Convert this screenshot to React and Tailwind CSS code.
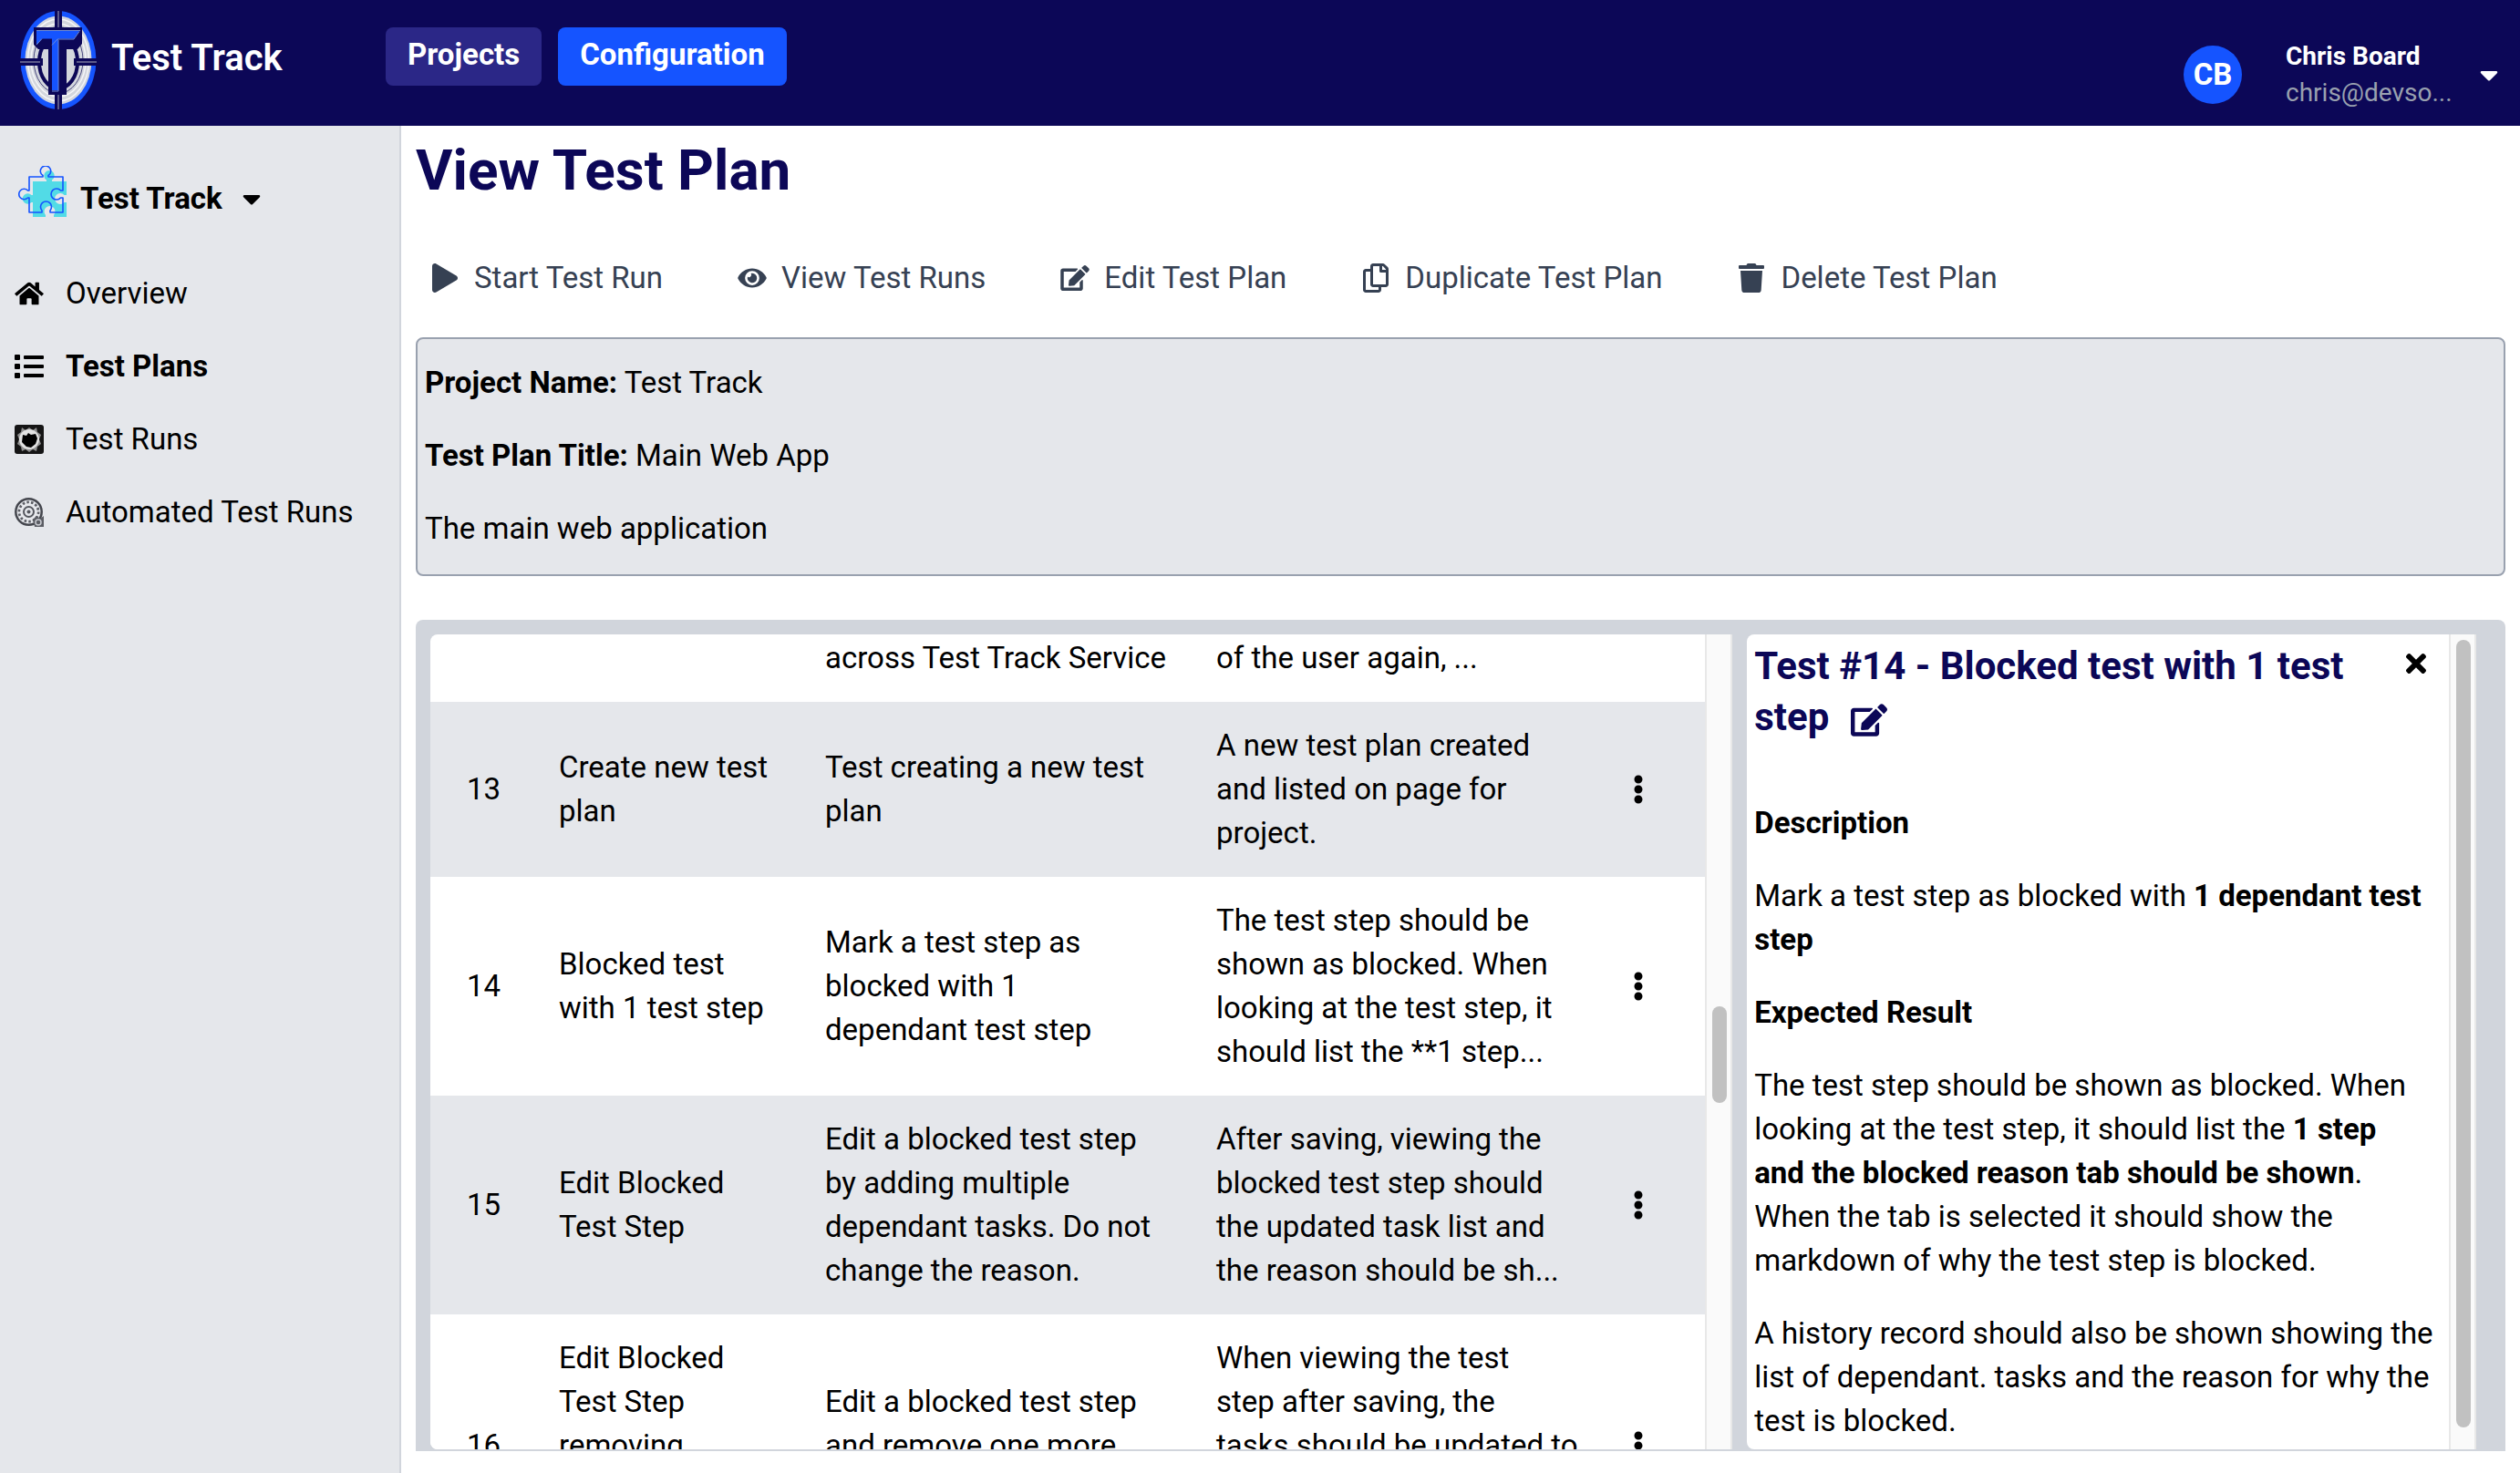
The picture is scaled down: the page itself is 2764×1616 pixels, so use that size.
import {
  FaCaretDown,
  FaEdit,
  FaEllipsisV,
  FaEye,
  FaHome,
  FaList,
  FaPlay,
  FaRegCopy,
  FaTimes,
  FaTrash,
} from "react-icons/fa";

const actions = [
  { label: "Start Test Run", icon: <FaPlay className="h-8 w-7" /> },
  { label: "View Test Runs", icon: <FaEye className="h-7 w-8" /> },
  { label: "Edit Test Plan", icon: <FaEdit className="h-7 w-8" /> },
  { label: "Duplicate Test Plan", icon: <FaRegCopy className="h-8 w-7" /> },
  { label: "Delete Test Plan", icon: <FaTrash className="h-8 w-7" /> },
];

const tests = [
  {
    id: 13,
    name: "Create new test\nplan",
    description: "Test creating a new test\nplan",
    expected: "A new test plan created\nand listed on page for\nproject.",
  },
  {
    id: 14,
    name: "Blocked test\nwith 1 test step",
    description: "Mark a test step as\nblocked with 1\ndependant test step",
    expected: "The test step should be\nshown as blocked. When\nlooking at the test step, it\nshould list the **1 step...",
  },
  {
    id: 15,
    name: "Edit Blocked\nTest Step",
    description: "Edit a blocked test step\nby adding multiple\ndependant tasks. Do not\nchange the reason.",
    expected: "After saving, viewing the\nblocked test step should\nthe updated task list and\nthe reason should be sh...",
  },
  {
    id: 16,
    name: "Edit Blocked\nTest Step\nremoving\ndependant\ntask",
    description: "Edit a blocked test step\nand remove one more\ndependant tasks.",
    expected: "When viewing the test\nstep after saving, the\ntasks should be updated to\nshow only the remaining\ntasks.",
  },
];

function Logo() {
  return (
    <svg viewBox="0 0 84 108" className="h-[108px] w-[84px] shrink-0" aria-hidden="true">
      <ellipse cx="42" cy="54" rx="41.5" ry="54" fill="#1554ff" />
      <ellipse cx="42" cy="54" rx="36.5" ry="48.5" fill="#d3d6dd" />
      <ellipse cx="42" cy="54" rx="33.5" ry="45" fill="none" stroke="#f4f5f8" strokeWidth="1.5" />
      <ellipse cx="42" cy="54" rx="30" ry="40" fill="none" stroke="#f4f5f8" strokeWidth="1.5" />
      <ellipse cx="42" cy="54" rx="27" ry="36.5" fill="none" stroke="#4b4a80" strokeWidth="1" />
      <ellipse cx="42" cy="56" rx="21" ry="29" fill="#d3d6dd" stroke="#0c0757" strokeWidth="4" />
      {/* crosshair */}
      <path d="M38 0h8v20h-8zM38 90h8v18h-8zM0 52h25v8H0zM59 52h25v8H59z" fill="#0c0757" />
      <path d="M42 0v20M42 90v18M0 56h22M62 56h22" stroke="#77779c" strokeWidth="1.5" />
      {/* T */}
      <path d="M15 18h53v18l-5 6H51v50H31V42H20l-5-5z" fill="#0c0757" />
      <path d="M18 22h47l-6 8.500H43l-7 7H35v-7H24l-6 7z" fill="#1554ff" />
      <path d="M35 37.500l7-7V87h-7z" fill="#1554ff" />
      <path d="M18 21.500h48M18 37l6-6.500M35 37.500l6-6.500h18l6-8.500M42 32v56h-7" fill="none" stroke="#6f8bd6" strokeWidth="1" />
    </svg>
  );
}

const PUZZLE =
  "M12 12H27V10.500A5.700 5.700 0 1 1 33 10.500V12H49V27H46.500A6 6 0 1 0 46.500 35H49V51H35V49A6 6 0 1 0 26 49V51H12V35H10.500A5.700 5.700 0 1 1 10.500 27H12Z";

function PuzzleIcon() {
  return (
    <svg viewBox="0 0 53 56" className="h-14 w-[53px] shrink-0" aria-hidden="true">
      <path d={PUZZLE} fill="#52dbe6" transform="translate(4 5)" />
      <path d={PUZZLE} fill="none" stroke="#1554ff" strokeWidth="1.6" strokeLinejoin="round" />
    </svg>
  );
}

function TestRunsIcon() {
  return (
    <svg viewBox="0 0 32 32" className="size-8" aria-hidden="true">
      <rect width="32" height="32" rx="3" fill="#151515" />
      <path
        d="M8 3l4 3 4-3 4 3 4-3 1 5 4 3-2 5 2 5-4 3-1 5-4-2-4 3-4-3-4 2-1-5-4-3 2-5-2-5 4-3z"
        fill="#8f8f8f"
      />
      <circle cx="16" cy="16" r="11" fill="#e2e2e2" />
      <path d="M9 11l4 1 2-3 3 2 5-1 2 5-2 6-5 4-5-1-5-5z" fill="#000" />
    </svg>
  );
}

function AutomatedIcon() {
  return (
    <svg viewBox="0 0 32 32" className="size-8" fill="none" aria-hidden="true">
      <circle cx="15.500" cy="15.500" r="14.200" stroke="#44464d" strokeWidth="2.500" />
      <circle cx="15.500" cy="15.500" r="10.500" stroke="#5b5d64" strokeWidth="3" strokeDasharray="2.500 2.200" />
      <circle cx="15.500" cy="15.500" r="8.500" stroke="#e9eaee" strokeWidth="1.500" />
      <circle cx="15.500" cy="15.500" r="5.500" stroke="#55575e" strokeWidth="2" />
      <circle cx="15.500" cy="15.500" r="2" fill="#55575e" />
      <path d="M20 24l4-4 4 3 4-3v12H22z" fill="#5b5d64" />
      <circle cx="26" cy="27" r="3" stroke="#c8cad0" strokeWidth="1.500" />
    </svg>
  );
}

const links = [
  { label: "Overview", icon: <FaHome className="h-7 w-8" /> },
  { label: "Test Plans", icon: <FaList className="size-8" />, active: true },
  { label: "Test Runs", icon: <TestRunsIcon /> },
  { label: "Automated Test Runs", icon: <AutomatedIcon /> },
];

function Header() {
  return (
    <header className="flex h-[138px] shrink-0 items-start bg-[#0c0757] pl-[22px] pr-6 font-bold text-white">
      <a href="#home" className="flex w-[401px] shrink-0 items-center gap-4 pt-3 text-[40px] font-semibold leading-[48px]">
        <Logo />
        <span className="pb-1">Test Track</span>
      </a>
      <nav className="flex gap-[18px] pt-[30px]">
        <button className="h-16 rounded-lg bg-[#2b2787] px-6 pb-1 leading-[48px]">Projects</button>
        <button className="h-16 rounded-lg bg-[#1554ff] px-6 pb-1 leading-[48px]">Configuration</button>
      </nav>
      <button className="ml-auto flex items-center pt-[42px] text-left text-[28px] leading-10">
        <span className="mr-12 flex size-16 items-center justify-center rounded-full bg-[#1554ff] text-[33px]">CB</span>
        <span className="w-[213px]">
          <span className="block">Chris Board</span>
          <span className="block font-normal text-gray-400">chris@devso...</span>
        </span>
        <FaCaretDown className="h-8 w-5" />
      </button>
    </header>
  );
}

function Sidebar() {
  return (
    <aside className="w-[440px] shrink-0 border-r-2 border-gray-300 bg-gray-200 pt-11">
      <button className="flex items-end pl-5 font-bold leading-10">
        <PuzzleIcon />
        <span className="ml-[15px] mr-[22px]">Test Track</span>
        <FaCaretDown className="mb-1 h-8 w-5" />
      </button>
      <ul className="mt-[60px] flex flex-col gap-8 pl-4">
        {links.map((link) => (
          <li key={link.label}>
            <a href="#nav" className={`flex items-center gap-6 ${link.active ? "font-bold" : ""}`}>
              {link.icon}
              {link.label}
            </a>
          </li>
        ))}
      </ul>
    </aside>
  );
}

function Scrollbar({ top, height }) {
  return (
    <div className="w-[30px] shrink-0 border-x-2 border-[#e8e8e8] bg-[#fafafa] px-[6px]">
      <div className="w-4 rounded-full bg-[#c1c1c1]" style={{ marginTop: top, height }} />
    </div>
  );
}

function TestTable() {
  return (
    <div className="flex overflow-hidden rounded-l-lg bg-white">
      <div className="min-w-0 flex-1 overflow-hidden">
        <table className="w-full table-fixed text-left">
          <colgroup>
            <col className="w-[117px]" />
            <col className="w-[292px]" />
            <col className="w-[429px]" />
            <col />
            <col className="w-[113px]" />
          </colgroup>
          <tbody>
            <tr>
              <td />
              <td />
              <td className="px-6 pt-0.5 pb-6">across Test Track Service</td>
              <td className="px-6 pt-0.5 pb-6">of the user again, ...</td>
              <td />
            </tr>
            {tests.map((test) => (
              <tr key={test.id} className="whitespace-pre odd:bg-white even:bg-gray-200">
                <td className="py-6 text-center">{test.id}</td>
                <td className="px-6 py-6">{test.name}</td>
                <td className="px-6 py-6">{test.description}</td>
                <td className="px-6 py-6">{test.expected}</td>
                <td className="px-6 py-6">
                  <button className="flex size-8 items-center justify-center" aria-label="Test options">
                    <FaEllipsisV className="h-8 w-3" />
                  </button>
                </td>
              </tr>
            ))}
          </tbody>
        </table>
      </div>
      <Scrollbar top={408} height={106} />
    </div>
  );
}

function TestDetail() {
  return (
    <div className="flex overflow-hidden rounded-l-lg bg-white">
      <div className="min-w-0 flex-1 overflow-hidden px-2 pt-[7px]">
        <div className="flex items-start justify-between">
          <h2 className="text-[42px] font-bold leading-[56px] text-[#0c0757]">
            Test #14 - Blocked test with 1 test
            <br />
            step
            <button className="ml-6 align-middle" aria-label="Edit test">
              <FaEdit className="h-9 w-10" />
            </button>
          </h2>
          <button className="mr-3 pt-[9px]" aria-label="Close">
            <FaTimes className="size-8" />
          </button>
        </div>
        <div className="mt-16 space-y-8">
          <h3 className="font-bold">Description</h3>
          <p>
            Mark a test step as blocked with <b>1 dependant test step</b>
          </p>
          <h3 className="font-bold">Expected Result</h3>
          <p>
            The test step should be shown as blocked. When looking at the test step, it should list the{" "}
            <b>
              1 step
              <br />
              and the blocked reason tab should be shown
            </b>
            .
            <br />
            When the tab is selected it should show the
            <br />
            markdown of why the test step is blocked.
          </p>
          <p>
            A history record should also be shown showing the list of dependant. tasks and the reason for why the test
            is blocked.
          </p>
        </div>
      </div>
      <Scrollbar top={6} height={864} />
    </div>
  );
}

export default function App() {
  return (
    <div className="flex h-screen flex-col bg-white font-['Roboto',sans-serif] text-[33px] leading-[48px] text-black">
      <Header />
      <div className="flex min-h-0 flex-1">
        <Sidebar />
        <main className="flex min-w-0 flex-1 flex-col px-4 pb-6 pt-[13px]">
          <h1 className="text-[62px] font-bold leading-[72px] text-[#0c0757]">View Test Plan</h1>

          <div className="mt-[58px] flex gap-[82px] pl-4 text-gray-700">
            {actions.map((action) => (
              <button key={action.label} className="flex items-center gap-4">
                <span className="flex w-8 justify-center">{action.icon}</span>
                {action.label}
              </button>
            ))}
          </div>

          <section className="mt-[41px] space-y-8 rounded-lg border-2 border-gray-400 bg-gray-200 px-2 pb-[26px] pt-6">
            <p>
              <b>Project Name:</b> Test Track
            </p>
            <p>
              <b>Test Plan Title:</b> Main Web App
            </p>
            <p>The main web application</p>
          </section>

          <section className="mt-12 grid min-h-0 flex-1 grid-cols-[25fr_14fr] grid-rows-[minmax(0,1fr)] gap-4 rounded-t-lg bg-gray-300 pb-0.5 pl-4 pr-8 pt-4">
            <TestTable />
            <TestDetail />
          </section>
        </main>
      </div>
    </div>
  );
}
